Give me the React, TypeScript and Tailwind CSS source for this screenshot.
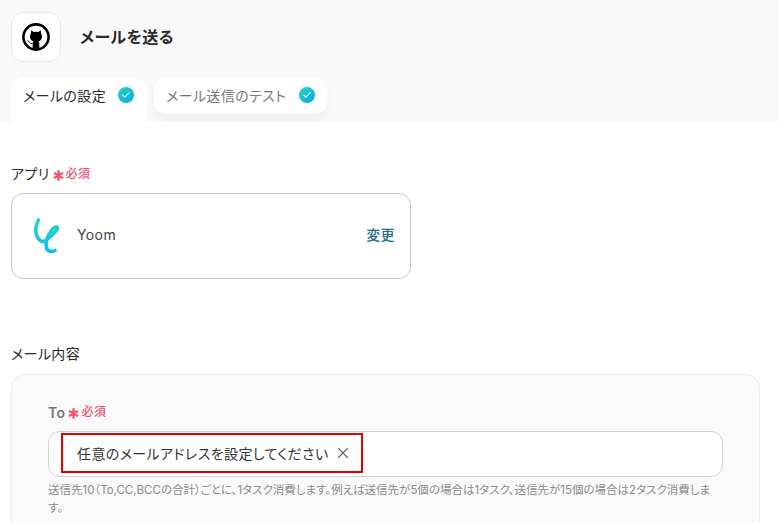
import { Check, X } from "lucide-react";

const font = { fontFamily: 'Inter, "Noto Sans CJK JP", sans-serif' };

// Required marker shown next to field labels
const Required = () => (
    <span className="ml-[3px] flex items-center text-[12px] font-medium leading-none text-[#f4516c]">
        <svg width="11" height="11" viewBox="0 0 10 10" className="mr-[2px] mt-[3px]" stroke="#f4516c" strokeWidth="2" strokeLinecap="round">
            <path d="M5 1V9M1.5 3L8.5 7M8.5 3L1.5 7" />
        </svg>
        必須
    </span>
);

const CheckBadge = () => (
    <span className="mt-[1px] flex h-4 w-4 items-center justify-center rounded-full bg-gradient-to-br from-[#2dd4bf] to-[#0ea5e9]">
        <Check className="h-2.5 w-2.5 text-white" strokeWidth={2.5} />
    </span>
);

const GithubLogo = () => (
    <svg width="28" height="28" viewBox="0 0 28 28">
        <circle cx="14" cy="14" r="12.6" fill="none" stroke="#000" strokeWidth="2.6" />
        <path
            d="M9.3 7.2L11.7 8.9Q14 8.4 16.3 8.9L18.7 7.2Q19.3 9 19 10.6Q20.2 12 20 14Q19.8 17.5 16.5 18.3Q17.3 19.2 17.3 20.5V25.5H10.7V20.5Q10.7 19.2 11.5 18.3Q8.2 17.5 8 14Q7.8 12 9 10.6Q8.7 9 9.3 7.2Z"
            fill="#000"
        />
        <path d="M5.5 17.5C7 18 7.5 20.8 10.7 20.6" fill="none" stroke="#000" strokeWidth="1" />
    </svg>
);

const YoomLogo = () => (
    <svg width="30" height="38" viewBox="0 0 30 38" fill="none">
        <defs>
            <linearGradient id="yoom" x1="0" y1="0" x2="0" y2="1">
                <stop offset="0" stopColor="#2dd4bf" />
                <stop offset="1" stopColor="#0ebcf5" />
            </linearGradient>
        </defs>
        <path
            d="M6.5 3C4 8 3 13 4.5 18C6 23 10 26 13.5 23.5C18 20 24.5 15 25.5 11.5C25.5 8.5 21.5 10 19 14C15 20 13 26 14.5 31C16 35 20 35 23 33.5"
            stroke="url(#yoom)"
            strokeWidth="3.6"
            strokeLinecap="round"
        />
    </svg>
);

export default function App() {
    return (
        <div
            className="h-[523px] w-[779px] overflow-hidden bg-white tracking-wide text-[#2a2a2a] [font-feature-settings:'palt']"
            style={font}
        >
            {/* Header */}
            <header className="h-[122px] bg-[#f9f9f9] pl-[11px] pt-3">
                <div className="flex items-center gap-[19px]">
                    <div className="flex h-[50px] w-[50px] items-center justify-center rounded-xl border border-[#e8e8e8] bg-white">
                        <GithubLogo />
                    </div>
                    <h1 className="text-[16px] font-semibold">メールを送る</h1>
                </div>

                {/* Tabs */}
                <div className="mt-4 flex gap-2">
                    <div className="flex h-11 w-[135px] items-start gap-3 rounded-t-xl bg-white pl-3 pt-2 text-[14px] font-normal leading-[19px]">
                        メールの設定
                        <CheckBadge />
                    </div>
                    <div className="flex h-9 w-[173px] items-start gap-[13px] rounded-xl bg-white pl-3 pt-2 text-[14px] font-normal leading-[19px] text-[#777] shadow-[0_6px_8px_rgba(0,0,0,0.04)]">
                        メール送信のテスト
                        <CheckBadge />
                    </div>
                </div>
            </header>

            <main className="pl-[11px]">
                {/* App */}
                <div className="mt-[41px] flex h-[20px] items-center text-[14px]">
                    アプリ
                    <span className="pt-[2px]">
                        <Required />
                    </span>
                </div>
                <div className="mt-[10px] flex h-[86px] w-[400px] items-center rounded-xl border border-[#c8c8c8] pl-5 pr-[15px]">
                    <YoomLogo />
                    <span className="mb-[3px] ml-[15px] text-[14px] text-[#444]">Yoom</span>
                    <span className="mb-[3px] ml-auto text-[14px] font-medium text-[#1f6f8b]">変更</span>
                </div>

                {/* Mail content */}
                <div className="mt-[65px] h-[20px] text-[14px] leading-[20px]">メール内容</div>
                <section className="mt-[10px] h-[200px] w-[749px] rounded-[14px] border border-[#e8eaed] bg-[#fafafa] pl-9 pr-9 pt-[27px]">
                    <div className="flex h-[20px] items-center text-[14px] font-semibold text-[#777]">
                        To
                        <Required />
                    </div>
                    <div className="relative mt-[9px] h-[46px] w-[675px] rounded-xl border border-[#ccd1da] bg-white">
                        {/* Chip with the red annotation box */}
                        <div className="absolute left-[12px] top-[1px] flex h-10 w-[302px] items-center border-2 border-[#e00000] p-[2px]">
                            <div className="flex h-[31px] w-full items-center rounded-full pl-3 pr-1.5 shadow-[0_0_3px_rgba(0,0,0,0.08)]">
                                <span className="text-[14px] text-[#333]">任意のメールアドレスを設定してください</span>
                                <X className="ml-auto mr-[1px] h-[18px] w-[18px] text-[#666]" strokeWidth={1.5} />
                            </div>
                        </div>
                    </div>
                    <p className="mt-1 w-[675px] text-[11.5px] leading-[18px] tracking-normal text-[#8a8a8a]">
                        送信先10（To,CC,BCCの合計）ごとに、1タスク消費します。例えば送信先が5個の場合は1タスク、送信先が15個の場合は2タスク消費します。
                    </p>
                </section>
            </main>
        </div>
    );
}
